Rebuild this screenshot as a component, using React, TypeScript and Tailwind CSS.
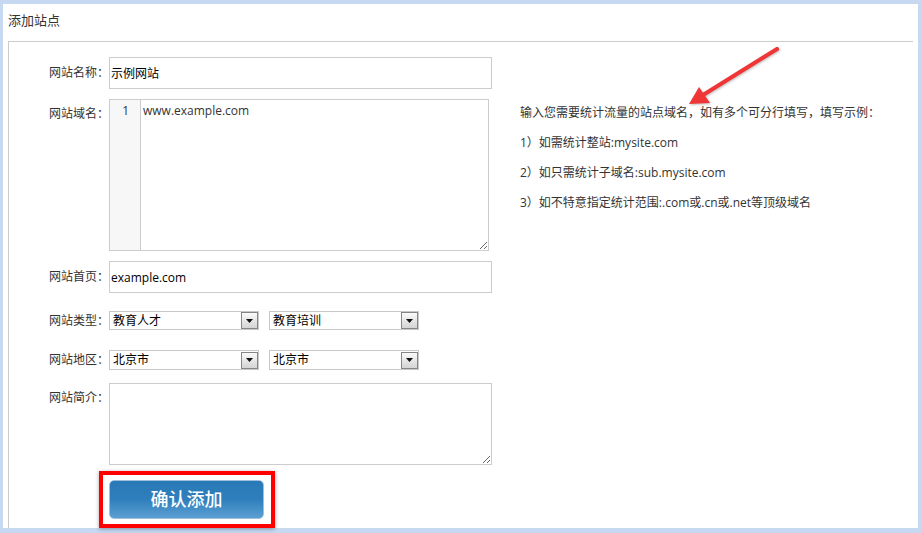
import type { ReactNode } from "react";

const font = { fontFamily: '"Open Sans", "Noto Sans CJK SC", sans-serif' };

function Label({ children, top }: { children: ReactNode; top?: boolean }) {
  return (
    <div
      className={`w-[100px] shrink-0 text-right text-[12px] leading-[16px] text-[#333] ${
        top ? "self-start pt-[7px]" : "self-center"
      }`}
    >
      {children}
    </div>
  );
}

function FakeSelect({ value }: { value: string }) {
  return (
    <div className="flex h-full w-[150px] items-center border border-[#c9c9c9] bg-white">
      <span className="flex-1 pl-[3px] text-[12px] leading-none text-black">{value}</span>
      <span className="flex h-[17px] w-[17px] items-center justify-center border border-[#858585] bg-gradient-to-b from-[#fafafa] to-[#d4d4d4]">
        <svg width="7" height="4" viewBox="0 0 7 4">
          <path d="M0 0h7L3.5 4z" fill="#111" />
        </svg>
      </span>
    </div>
  );
}

export default function App() {
  return (
    <div className="relative h-[533px] w-[922px] bg-[#c6d9f1] pb-[5px] pl-[3px] pr-[4px] pt-[4px]" style={font}>
      <div className="flex h-full flex-col bg-white">
        <div className="h-[37px] pl-[5px] pt-[6px] text-[13px] leading-[20px] text-[#333]">添加站点</div>

        <div className="mx-[5px] flex flex-1 border-l border-t border-[#cccccc]">
          {/* form */}
          <div className="flex flex-col pt-[15px]">
            <div className="flex h-[32px]">
              <Label>网站名称：</Label>
              <input
                readOnly
                defaultValue="示例网站"
                className="h-full w-[383px] border border-[#cccccc] pl-[1px] text-[12px] text-black outline-none"
              />
            </div>

            <div className="mt-[10px] flex h-[152px]">
              <Label top>网站域名：</Label>
              <div className="flex h-full w-[380px] border border-[#cccccc]">
                <div className="w-[31px] shrink-0 border-r border-[#cccccc] bg-[#f7f7f7] pr-[11px] pt-[3px] text-right text-[12px] leading-[16px] text-[#333]">
                  1
                </div>
                <textarea
                  readOnly
                  defaultValue="www.example.com"
                  className="h-full flex-1 pl-[2px] pt-[3px] text-[12px] leading-[16px] text-[#333] outline-none"
                />
              </div>
            </div>

            <div className="mt-[10px] flex h-[32px]">
              <Label>网站首页：</Label>
              <input
                readOnly
                defaultValue="example.com"
                className="h-full w-[383px] border border-[#cccccc] pl-[1px] text-[12px] text-black outline-none"
              />
            </div>

            <div className="mt-[18px] flex h-[19px]">
              <Label>网站类型：</Label>
              <div className="flex h-full gap-[10px]">
                <FakeSelect value="教育人才" />
                <FakeSelect value="教育培训" />
              </div>
            </div>

            <div className="mt-[20px] flex h-[20px]">
              <Label>网站地区：</Label>
              <div className="flex h-full gap-[10px]">
                <FakeSelect value="北京市" />
                <FakeSelect value="北京市" />
              </div>
            </div>

            <div className="mt-[13px] flex h-[82px]">
              <Label top>网站简介：</Label>
              <textarea readOnly className="h-full w-[383px] border border-[#cccccc] outline-none" />
            </div>

            <div className="ml-[90px] mt-[6px] w-[176px] border-[4px] border-[#ff0000] pb-[5px] pl-[6px] pr-[7px] pt-[5px] shadow-[0_1px_4px_rgba(0,0,0,0.35)]">
              <button
                type="button"
                className="flex h-[39px] w-[155px] items-center justify-center rounded-[5px] border border-[#9fc0dc] bg-gradient-to-b from-[#2a79b7] via-[#2e7fbc] to-[#5b9fd2] text-[18px] font-medium text-white"
              >
                确认添加
              </button>
            </div>
          </div>

          {/* hint */}
          <div className="ml-[28px] pt-[56px] text-[12px] leading-[30px] text-[#333]">
            <p>输入您需要统计流量的站点域名，如有多个可分行填写，填写示例：</p>
            <p>1）如需统计整站:mysite.com</p>
            <p>2）如只需统计子域名:sub.mysite.com</p>
            <p>3）如不特意指定统计范围:.com或.cn或.net等顶级域名</p>
          </div>
        </div>
      </div>

      {/* annotation arrow */}
      <svg className="pointer-events-none absolute left-0 top-0" width="922" height="533">
        <g style={{ filter: "drop-shadow(1px 1px 1px rgba(0,0,0,0.25))" }}>
          <line x1="777" y1="49" x2="703" y2="95" stroke="#ef3535" strokeWidth="4" strokeLinecap="round" />
          <path d="M689 104 L699 87 L710 103 Z" fill="#ef3535" />
        </g>
      </svg>
    </div>
  );
}
